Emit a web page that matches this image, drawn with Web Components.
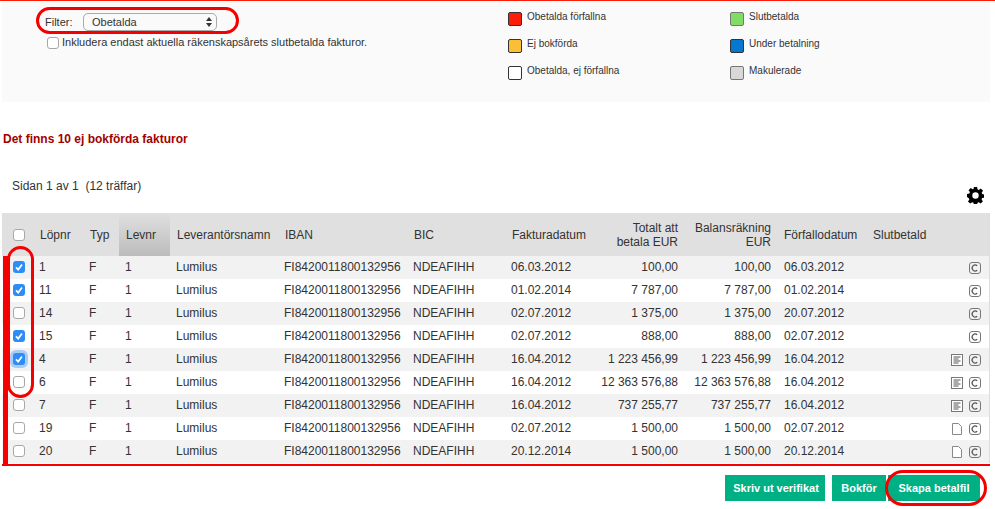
<!DOCTYPE html>
<html lang="sv">
<head>
<meta charset="utf-8">
<title>Fakturor</title>
<style>
  html, body { margin: 0; background: #fff; }
  body { font-family: "Liberation Sans", Arial, sans-serif; color: #333; }
</style>
</head>
<body>
<invoice-page></invoice-page>
<script>
class MarkBox extends HTMLElement {
    constructor() {
        super();
        this.shadowDOM = this.attachShadow({mode: "open"});
    }
    connectedCallback() {
        const tick = this.hasAttribute("checked")
            ? `<svg viewBox="0 0 12 12" width="12" height="12"><path d="M3 6.3 5.2 8.6 9 3.4" fill="none" stroke="#fff" stroke-width="1.7"/></svg>`
            : "";
        this.shadowDOM.innerHTML = `
        <style>
        :host { display: inline-block; width: 12px; height: 12px; vertical-align: middle; }
        .box {
            display: block; box-sizing: border-box; width: 12px; height: 12px;
            border: 1px solid #a8a8a8; border-radius: 3px; background: #fff;
        }
        :host([checked]) .box { border: 0; background: #2d8cf6; }
        :host([focused]) .box { box-shadow: 0 0 0 3px #a9ccf5; }
        svg { display: block; }
        </style>
        <span class="box">${tick}</span>`;
    }
}
customElements.define("mark-box", MarkBox);

class LegendItem extends HTMLElement {
    constructor() {
        super();
        this.shadowDOM = this.attachShadow({mode: "open"});
    }
    connectedCallback() {
        this.shadowDOM.innerHTML = `
        <style>
        :host { display: flex; align-items: flex-start; gap: 5px; height: 27px; font-size: 10px; line-height: 12px; color: #333; }
        .swatch { box-sizing: border-box; width: 14px; height: 14px; border: 1px solid #333; border-radius: 2px; background: ${this.getAttribute("color")}; }
        :host([soft]) .swatch { border-color: #777; }
        .label { margin-top: -1px; }
        </style>
        <span class="swatch"></span><span class="label"><slot></slot></span>`;
    }
}
customElements.define("legend-item", LegendItem);

class FilterPanel extends HTMLElement {
    constructor() {
        super();
        this.shadowDOM = this.attachShadow({mode: "open"});
    }
    connectedCallback() {
        this.shadowDOM.innerHTML = `
        <style>
        :host { display: grid; grid-template-columns: 506px 222px 1fr; box-sizing: border-box; height: 101px; margin: 0 5px 0 2px; background: #fafafa; font-size: 11px; }
        .filter { padding-top: 11px; }
        .line { display: flex; align-items: center; height: 19px; padding-left: 43px; }
        .line label { width: 38px; }
        .select {
            box-sizing: border-box; display: flex; align-items: center; justify-content: space-between;
            width: 134px; height: 18px; padding: 0 3px 0 8px;
            border: 1px solid #aaa; border-radius: 5px; background: #fafafa; color: #333; font-size: 11px;
        }
        .check { display: flex; align-items: center; gap: 3px; height: 18px; padding: 0 0 0 45px; color: #333; margin-top: 2px; }
        .check mark-box { margin-top: 1px; }
        .legend { padding-top: 11px; }
        svg { display: block; }
        </style>
        <div class="filter">
            <div class="line"><label>Filter:</label>
                <div class="select"><span>Obetalda</span>
                    <svg width="8" height="12" viewBox="0 0 8 12"><path d="M4 1 7 5H1ZM4 11 1 7H7Z" fill="#333"/></svg>
                </div>
            </div>
            <div class="check"><mark-box></mark-box><span>Inkludera endast aktuella räkenskapsårets slutbetalda fakturor.</span></div>
        </div>
        <div class="legend">
            <legend-item color="#fb1d08">Obetalda förfallna</legend-item>
            <legend-item color="#fbbf35">Ej bokförda</legend-item>
            <legend-item color="#ffffff">Obetalda, ej förfallna</legend-item>
        </div>
        <div class="legend">
            <legend-item color="#80dc62" soft>Slutbetalda</legend-item>
            <legend-item color="#0479cf">Under betalning</legend-item>
            <legend-item color="#d8d8d8" soft>Makulerade</legend-item>
        </div>`;
    }
}
customElements.define("filter-panel", FilterPanel);

const ICONS = {
    copy: `<svg width="12" height="12" viewBox="0 0 12 12"><rect x=".5" y=".5" width="11" height="11" rx="2.5" fill="none" stroke="#777"/><path d="M8.2 3.8A3 3 0 1 0 8.2 8.2" fill="none" stroke="#555" stroke-width="1.2"/></svg>`,
    text: `<svg width="12" height="12" viewBox="0 0 12 12"><rect x=".5" y=".5" width="11" height="11" fill="#fff" stroke="#777"/><path d="M2.5 3h7M2.5 5h5M2.5 7h7M2.5 9h5" stroke="#555"/></svg>`,
    blank: `<svg width="12" height="12" viewBox="0 0 12 12"><path d="M1.5.5H7.5L10.5 3.5V11.5H1.5Z" fill="#fff" stroke="#888"/></svg>`
};

class InvoiceTable extends HTMLElement {
    constructor() {
        super();
        this.shadowDOM = this.attachShadow({mode: "open"});
    }
    set rows(list) {
        this._rows = list;
        this.render();
    }
    render() {
        const body = this._rows.map(r => `
            <tr>
                <td class="c"><mark-box ${r.on ? "checked" : ""} ${r.focus ? "focused" : ""}></mark-box></td>
                <td>${r.nr}</td><td>F</td><td>1</td><td>Lumilus</td>
                <td>FI8420011800132956</td><td>NDEAFIHH</td><td>${r.inv}</td>
                <td class="r">${r.sum}</td><td class="r">${r.sum}</td><td class="due">${r.due}</td><td></td>
                <td class="i"><span>${r.doc ? ICONS[r.doc] : ""}</span><span>${ICONS.copy}</span></td>
            </tr>`).join("");
        this.shadowDOM.innerHTML = `
        <style>
        :host { display: block; box-sizing: border-box; width: 988px; margin-left: 2px; font-size: 12px; color: #333; border-right: 1px solid #ddd; }
        table { border-collapse: collapse; table-layout: fixed; width: 987px; }
        th { height: 43px; padding: 0 0 0 7px; background: #e0e0e0; font-weight: normal; text-align: left; line-height: 14px; box-sizing: border-box; }
        th.sorted { background: linear-gradient(#e0e0e0, #bcbcbc); }
        th.wide { padding-left: 8px; }
        th.c { padding: 0 0 0 3px; text-align: center; }
        td.c { padding: 0 0 3px 3px; text-align: center; }
        th.r { text-align: right; padding: 0 5px 0 0; }
        td.r { text-align: right; padding: 0 5px 2px 0; }
        td { height: 23px; padding: 0 0 2px 6px; box-sizing: border-box; white-space: nowrap; }
        tbody tr:nth-child(odd) td { background: #f2f2f2; }
        td.due { padding-left: 8px; }
        td.i { display: flex; justify-content: flex-end; align-items: center; gap: 6px; height: 23px; padding: 0 8px 0 0; }
        td.i span { display: block; width: 12px; height: 12px; }
        svg { display: block; }
        </style>
        <table>
            <colgroup>
                <col style="width:31px"><col style="width:50px"><col style="width:36px"><col style="width:51px">
                <col style="width:108px"><col style="width:129px"><col style="width:98px"><col style="width:95px">
                <col style="width:83px"><col style="width:93px"><col style="width:89px"><col style="width:72px"><col>
            </colgroup>
            <thead><tr>
                <th class="c"><mark-box></mark-box></th>
                <th>Löpnr</th><th>Typ</th><th class="sorted">Levnr</th><th>Leverantörsnamn</th>
                <th>IBAN</th><th>BIC</th><th>Fakturadatum</th>
                <th class="r">Totalt att betala EUR</th><th class="r">Balansräkning EUR</th>
                <th class="wide">Förfallodatum</th><th class="wide">Slutbetald</th><th></th>
            </tr></thead>
            <tbody>${body}</tbody>
        </table>`;
    }
}
customElements.define("invoice-table", InvoiceTable);

class ActionButton extends HTMLElement {
    constructor() {
        super();
        this.shadowDOM = this.attachShadow({mode: "open"});
    }
    connectedCallback() {
        this.shadowDOM.innerHTML = `
        <style>
        :host { display: flex; align-items: center; justify-content: center; box-sizing: border-box; height: 26px; background: #00b085; color: #fff; font-size: 11px; font-weight: bold; white-space: nowrap; }
        </style>
        <slot></slot>`;
    }
}
customElements.define("action-button", ActionButton);

class InvoicePage extends HTMLElement {
    constructor() {
        super();
        this.shadowDOM = this.attachShadow({mode: "open"});
    }
    connectedCallback() {
        this.shadowDOM.innerHTML = `
        <style>
        :host { display: block; position: relative; width: 995px; height: 509px; overflow: hidden; border-top: 1px solid #fb1d08; box-sizing: border-box; }
        .title { margin: 30px 0 0 3px; height: 14px; line-height: 14px; font-size: 12px; font-weight: bold; color: #a30000; }
        .pager { display: flex; justify-content: space-between; height: 34px; margin: 0 11px 0 12px; padding-top: 33px; font-size: 12px; color: #333; align-items: flex-start; }
        .pager span { line-height: 14px; }
        .pager svg { display: block; margin-top: 8px; }
        .actions { display: flex; justify-content: flex-end; gap: 7px; margin: 12px 15px 0 0; }
        .actions action-button:nth-child(1) { width: 100px; padding-left: 2px; }
        .actions action-button:nth-child(2) { width: 54px; }
        .actions action-button:nth-child(3) { width: 92px; margin-left: -5px; }
        .mark { position: absolute; box-sizing: border-box; border: 3px solid #f40000; border-radius: 18px; }
        .bar { position: absolute; background: #f40000; }
        </style>
        <filter-panel></filter-panel>
        <div class="title">Det finns 10 ej bokförda fakturor</div>
        <div class="pager">
            <span>Sidan 1 av 1 &nbsp;(12 träffar)</span>
            <svg width="17" height="17" viewBox="0 0 18 18"><path fill="#000" fill-rule="evenodd" d="M7.3 0h3.4l.4 2.5 1.5.6 2-1.5 2.4 2.4-1.5 2 .6 1.5 2.4.4v3.4l-2.5.4-.6 1.5 1.5 2-2.4 2.4-2-1.5-1.5.6-.3 2.5H7.3l-.4-2.5-1.5-.6-2 1.5L1 15.3l1.5-2-.6-1.5L0 10.7V7.3l2.5-.4.6-1.5-1.5-2L4 1l2 1.5 1-.5ZM9 5.6a3.4 3.4 0 1 0 0 6.8 3.4 3.4 0 0 0 0-6.8Z"/></svg>
        </div>
        <invoice-table></invoice-table>
        <div class="actions">
            <action-button>Skriv ut verifikat</action-button>
            <action-button>Bokför</action-button>
            <action-button>Skapa betalfil</action-button>
        </div>
        <div class="mark" style="left:36px;top:6px;width:203px;height:27px"></div>
        <div class="bar" style="left:3px;top:255px;width:5px;height:209px"></div>
        <div class="bar" style="left:2px;top:463px;width:988px;height:2px"></div>
        <div class="mark" style="left:7px;top:245px;width:27px;height:152px"></div>
        <div class="mark" style="left:885px;top:469px;width:102px;height:36px"></div>`;

        const due = {"1":"06.03.2012","11":"01.02.2014","14":"20.07.2012","15":"02.07.2012","4":"16.04.2012","6":"16.04.2012","7":"16.04.2012","19":"02.07.2012","20":"20.12.2014"};
        this.shadowDOM.querySelector("invoice-table").rows = [
            {nr: "1", inv: "06.03.2012", sum: "100,00", on: true},
            {nr: "11", inv: "01.02.2014", sum: "7 787,00", on: true},
            {nr: "14", inv: "02.07.2012", sum: "1 375,00"},
            {nr: "15", inv: "02.07.2012", sum: "888,00", on: true},
            {nr: "4", inv: "16.04.2012", sum: "1 223 456,99", on: true, focus: true, doc: "text"},
            {nr: "6", inv: "16.04.2012", sum: "12 363 576,88", doc: "text"},
            {nr: "7", inv: "16.04.2012", sum: "737 255,77", doc: "text"},
            {nr: "19", inv: "02.07.2012", sum: "1 500,00", doc: "blank"},
            {nr: "20", inv: "20.12.2014", sum: "1 500,00", doc: "blank"}
        ].map(r => ({...r, due: due[r.nr]}));
    }
}
customElements.define("invoice-page", InvoicePage);
</script>
</body>
</html>
